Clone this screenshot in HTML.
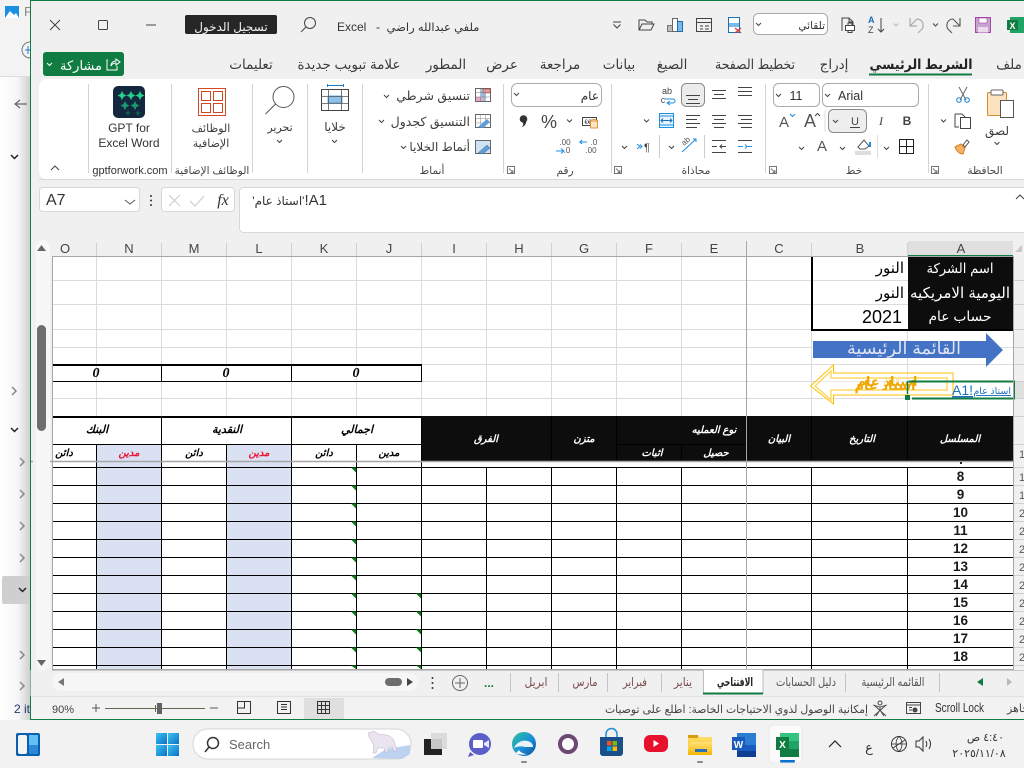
<!DOCTYPE html>
<html lang="ar"><head><meta charset="utf-8"><title>Excel</title>
<style>
html,body{margin:0;padding:0;background:#f2f2f2;width:1024px;height:768px;overflow:hidden}
svg{display:block;position:absolute;left:0;top:0}
text{font-family:"Liberation Sans","DejaVu Sans",sans-serif;fill:#333;font-size:12px}
.m{text-anchor:middle}
.r{direction:rtl}
.h{font-size:13.5px;fill:#3a3a3a}
.t{font-size:12px;fill:#3c3c3c}
.g{font-size:10.5px;fill:#444}
.c{font-size:14px;fill:#555}
.w{font-size:13.5px;fill:#fff;font-weight:normal}
.b{font-size:15px;fill:#000}
.th{font-size:10px;font-weight:bold;font-style:italic;fill:#fff}
.ts{font-size:10px;font-weight:bold;font-style:italic;fill:#000}
.tr{font-size:10px;font-weight:bold;font-style:italic;fill:#f01030}
.n{font-size:13.5px;font-weight:bold;fill:#1a1a1a}
.z{font-family:"Liberation Serif","DejaVu Serif",serif;font-size:14px;font-weight:bold;font-style:italic;fill:#000}
.tab{font-size:12px;fill:#555}
.ic{fill:none;stroke:#444;stroke-width:1}
.gr{fill:none;stroke:#777;stroke-width:1}
.ch{fill:none;stroke:#444;stroke-width:1}
</style></head>
<body>
<svg width="1024" height="768" viewBox="0 0 1024 768" xmlns="http://www.w3.org/2000/svg">
<defs>
<linearGradient id="sh" x1="0" x2="1" y1="0" y2="0"><stop offset="0" stop-color="#fff"/><stop offset=".6" stop-color="#f6f6f6"/><stop offset="1" stop-color="#cfcfcf"/></linearGradient>
<linearGradient id="ed" x1="0" x2="1" y1="0" y2="1"><stop offset="0" stop-color="#2fc5a0"/><stop offset=".55" stop-color="#1a8fd8"/><stop offset="1" stop-color="#0c4f9a"/></linearGradient>
<linearGradient id="fo" x1="0" x2="0" y1="0" y2="1"><stop offset="0" stop-color="#ffe27a"/><stop offset="1" stop-color="#f7b500"/></linearGradient>
<linearGradient id="st" x1="0" x2="1" y1="0" y2="1"><stop offset="0" stop-color="#3bc3f5"/><stop offset="1" stop-color="#0a72c4"/></linearGradient>
</defs>

<!-- background window at left -->
<rect x="0" y="0" width="30" height="720" fill="url(#sh)"/>
<rect x="0" y="0" width="30" height="76" fill="#f3f3f3"/>
<path d="M0 76.500H30" stroke="#ddd"/>
<path d="M5 6h14v12H5z" fill="#1b8fe0"/><path d="M5 18l5-7 4 4 2-2 3 5z" fill="#fff"/>
<text x="24" y="16" style="font-size:13px;fill:#888">P</text>
<circle cx="30" cy="50" r="8" fill="none" stroke="#777"/><path d="M25 50h5M28 46v8" stroke="#1b7fd0"/>
<path d="M27 104H16M20 100l-5 4 5 4" fill="none" stroke="#666" stroke-width="1.200"/>
<path d="M11 155l3.500 3.500 3.500-3.500" fill="none" stroke="#222" stroke-width="1.500"/>
<path d="M12 387l4 4-4 4" fill="none" stroke="#888" stroke-width="1.500"/>
<path d="M11 428l3.500 3.500 3.500-3.500" fill="none" stroke="#222" stroke-width="1.500"/>
<path d="M20 458l4 4-4 4M20 490l4 4-4 4M20 522l4 4-4 4M20 554l4 4-4 4M20 651l4 4-4 4M20 682l4 4-4 4" fill="none" stroke="#888" stroke-width="1.500"/>
<rect x="2" y="576" width="28" height="28" rx="2" fill="#cfcfcf"/>
<path d="M19 588l3.500 3.500 3.500-3.500" fill="none" stroke="#222" stroke-width="1.500"/>
<text x="14" y="713" style="font-size:12px;fill:#1f3a6e">2 it</text>

<!-- excel window -->
<rect x="30" y="0" width="994" height="720" fill="#f0f0f0"/>
<path d="M30.500 720V.5H1024" fill="none" stroke="#107c41"/>
<path d="M30 719.500H1024" stroke="#107c41" stroke-width="1"/>

<!-- title bar -->
<path d="M50 20l10 10M60 20l-10 10" class="ic"/>
<rect x="98.500" y="20.500" width="9" height="9" rx="1" class="ic"/>
<path d="M146 25h10" class="ic"/>
<rect x="185" y="15" width="92" height="19" rx="2" fill="#262626"/>
<text x="231" y="31" class="m r" style="font-size:12px;fill:#f2f2f2">تسجيل الدخول</text>
<circle cx="310" cy="23" r="5.500" class="ic"/><path d="M306 27l-5 5" class="ic"/>
<text x="337" y="31" style="font-size:12px;fill:#333">Excel</text>
<text x="378" y="31" class="m" style="font-size:12px">-</text>
<text x="433" y="31" class="m r" style="font-size:11.500px;fill:#333">ملفي عبدالله راضي</text>

<!-- QAT -->
<path d="M613 22h8M613.500 24.500l3.500 3.500 3.500-3.500" class="ic"/>
<path d="M639 30V20h6l2 2h5v2M639 30l3-6h12l-3 6z" class="ic"/>
<rect x="667.500" y="25.500" width="5" height="6" fill="#bbb" stroke="#777"/><rect x="672.500" y="18.500" width="5" height="13" fill="#fff" stroke="#666"/><rect x="677.500" y="21.500" width="5" height="10" fill="#79b8e8" stroke="#1b6fb5"/>
<rect x="696.500" y="18.500" width="15" height="13" class="ic"/><path d="M696.500 22.500h15M700 26h3M705 26h4M700 29h3M705 29h4" class="ic"/>
<rect x="728.500" y="17.500" width="11" height="15" fill="#fff" stroke="#1b6fb5"/><rect x="729" y="23" width="10" height="4" fill="#7db9e8"/><path d="M735 28l6 5M741 28l-6 5" stroke="#d83b3b" stroke-width="1.200" fill="none"/>
<rect x="753.500" y="13.500" width="74" height="21" rx="5" fill="#fff" stroke="#aaa"/>
<path d="M756 23l2.500 2.500 2.500-2.500" class="ch"/>
<text x="825" y="29" class="r" style="font-size:10.500px;fill:#333">تلقائي</text>
<path d="M842 31V18h7l4 4v4M849 18v4h4" class="ic"/><rect x="845.500" y="25.500" width="9" height="5" fill="#fff" stroke="#444"/><path d="M848 25v-2h4v2M848 30.500v2h4v-2" class="ic"/>
<text x="868" y="23" style="font-size:9px;fill:#1b6fb5;font-weight:bold">A</text><text x="868" y="33" style="font-size:9px;fill:#444">Z</text><path d="M881 18v14M878 29l3 3 3-3" class="ic"/>
<path d="M893.500 23.500l2.500 2.500 2.500-2.500" fill="none" stroke="#bbb"/>
<path d="M910 18v8h7M910 26l7-7h1a6.500 6.500 0 0 1 4 10l-4 4" fill="none" stroke="#aaa" stroke-width="1.200"/>
<path d="M933 23.500l2.500 2.500 2.500-2.500" class="ch"/>
<path d="M960 18v8h-7M960 26l-7-7h-1a6.500 6.500 0 0 0-4 10l4 4" fill="none" stroke="#555" stroke-width="1.100"/>
<rect x="975.500" y="17.500" width="15" height="15" fill="#c9a3cf" stroke="#a347a8"/><rect x="979" y="18" width="8" height="5" fill="#fff" stroke="#a347a8" stroke-width=".6"/><rect x="978" y="27" width="10" height="5.500" fill="#ebd9ee"/>
<rect x="1010" y="17" width="14" height="16" fill="#21a366"/><rect x="1007" y="20" width="11" height="10" fill="#107c41"/><text x="1012.500" y="29" class="m" style="font-size:9px;font-weight:bold;fill:#fff">X</text>

<!-- tabs -->
<text x="1009" y="69" class="m r h">ملف</text>
<text x="921" y="69" class="m r h" style="font-weight:bold;fill:#222" textLength="103" lengthAdjust="spacingAndGlyphs">الشريط الرئيسي</text>
<rect x="869" y="73.500" width="103" height="2" fill="#107c41"/>
<text x="834" y="69" class="m r h">إدراج</text>
<text x="755" y="69" class="m r h" textLength="80" lengthAdjust="spacingAndGlyphs">تخطيط الصفحة</text>
<text x="672" y="69" class="m r h">الصيغ</text>
<text x="619" y="69" class="m r h">بيانات</text>
<text x="560" y="69" class="m r h">مراجعة</text>
<text x="502" y="69" class="m r h">عرض</text>
<text x="446" y="69" class="m r h">المطور</text>
<text x="349" y="69" class="m r h" textLength="103" lengthAdjust="spacingAndGlyphs">علامة تبويب جديدة</text>
<text x="251" y="69" class="m r h">تعليمات</text>
<rect x="43" y="52" width="81" height="24" rx="3" fill="#107c41"/>
<text x="81" y="70" class="m r" style="font-size:13px;fill:#fff" textLength="42" lengthAdjust="spacingAndGlyphs">مشاركة</text>
<path d="M108 60h-1v10h10v-4M111 66c0-3 2-5 5-5v-2l4 3-4 3v-2c-2 0-4 1-5 3z" fill="none" stroke="#fff"/>
<path d="M47 63l2.500 2.500 2.500-2.500" fill="none" stroke="#fff"/>

<!-- ribbon -->
<path d="M1024 79H47a8 8 0 0 0-8 8v84a8 8 0 0 0 8 8h977z" fill="#fff"/>
<path d="M39 179.500H1024" stroke="#d8d8d8"/>
<path d="M88.500 84V173M171.500 84V173M252.500 84V173M307.500 84V173M362.500 84V173M503.500 84V173M611.500 84V173M765.500 84V173M928.500 84V173" stroke="#d4d4d4"/>
<path d="M51 170l4-4 4 4" class="ic"/>

<!-- GPT -->
<rect x="113" y="86" width="32" height="32" rx="5" fill="#13283f"/>
<g fill="#28d18a"><path d="M122 91l1.500 3 3 1.500-3 1.500-1.500 3-1.500-3-3-1.500 3-1.500z"/><path d="M131 91l1.500 3 3 1.500-3 1.500-1.500 3-1.500-3-3-1.500 3-1.500z"/><path d="M140 91l1.500 3 3 1.500-3 1.500-1.500 3-1.500-3-3-1.500 3-1.500z"/></g>
<g fill="#1a9a6c"><path d="M125 101l1.500 3 3 1.500-3 1.500-1.500 3-1.500-3-3-1.500 3-1.500z"/><path d="M135 101l1.500 3 3 1.500-3 1.500-1.500 3-1.500-3-3-1.500 3-1.500z"/></g>
<g fill="#115f4d"><path d="M128 110l1 2 2 1-2 1-1 2-1-2-2-1 2-1z"/><path d="M138 110l1 2 2 1-2 1-1 2-1-2-2-1 2-1z"/></g>
<text x="129" y="132" class="m" style="font-size:12px;fill:#333">GPT for</text>
<text x="129" y="147" class="m" style="font-size:12px;fill:#333">Excel Word</text>
<text x="130" y="174" class="m" style="font-size:11px;fill:#333">gptforwork.com</text>

<!-- add-ins -->
<rect x="198.500" y="88.500" width="27" height="27" fill="none" stroke="#d24726"/>
<rect x="201.500" y="91.500" width="9" height="9" fill="none" stroke="#d24726"/><rect x="213.500" y="91.500" width="9" height="9" fill="none" stroke="#d24726"/>
<rect x="201.500" y="103.500" width="9" height="9" fill="none" stroke="#d24726"/><rect x="213.500" y="103.500" width="9" height="9" fill="none" stroke="#d24726"/>
<text x="211" y="132" class="m r t" style="font-size:11px">الوظائف</text>
<text x="211" y="147" class="m r t" style="font-size:11px">الإضافية</text>
<text x="212" y="174" class="m r g">الوظائف الإضافية</text>

<!-- edit -->
<circle cx="283.500" cy="97" r="10.500" fill="none" stroke="#555"/><path d="M275.500 104l-10 10" stroke="#555" fill="none"/>
<text x="280" y="131" class="m r t" style="font-size:11px">تحرير</text>
<path d="M277 140l2.500 2.500 2.500-2.500" class="ch"/>
<!-- cells -->
<rect x="321.500" y="89.500" width="27" height="21" fill="#fff" stroke="#444"/>
<rect x="328" y="96" width="14" height="7" fill="#8fc1ea" stroke="#1b7fd0" stroke-width=".6"/>
<path d="M321.500 96.500h27M321.500 103.500h27M328.500 89.500v21M341.500 89.500v21" stroke="#555" fill="none" stroke-width=".8"/>
<path d="M327.500 85.500h16M327.500 84v3M343.500 84v3" stroke="#1b7fd0" fill="none"/>
<text x="335" y="131" class="m r t">خلايا</text>
<path d="M332 140l2.500 2.500 2.500-2.500" class="ch"/>

<!-- styles -->
<text x="470" y="100" class="r t" style="font-size:12.500px">تنسيق شرطي</text>
<path d="M384 95l2.500 2.500 2.500-2.500" class="ch"/>
<rect x="475.500" y="88.500" width="15" height="13" fill="#fff" stroke="#666"/><rect x="481" y="89" width="4" height="12" fill="#8fc1ea"/><rect x="483" y="89" width="7" height="4" fill="#e8a0a0" stroke="#c33" stroke-width=".5"/><rect x="476" y="97" width="7" height="4" fill="#eaa8c8"/><path d="M475.500 92.500h15M480.500 88.500v13M485.500 88.500v13M475.500 97h15" stroke="#777" stroke-width=".5" fill="none"/>
<text x="470" y="126" class="r t" style="font-size:12.500px">التنسيق كجدول</text>
<path d="M379 120l2.500 2.500 2.500-2.500" class="ch"/>
<rect x="475.500" y="114.500" width="15" height="13" fill="#fff" stroke="#666"/><path d="M475.500 118.500h15M480.500 114.500v13M485.500 114.500v13M475.500 123h15" stroke="#888" stroke-width=".5" fill="none"/><path d="M478 127l9-8 3 3-7 6z" fill="#5a9fdb"/>
<text x="470" y="151" class="r t">أنماط الخلايا</text>
<path d="M401 146l2.500 2.500 2.500-2.500" class="ch"/>
<rect x="475.500" y="140.500" width="15" height="13" fill="#cfe3f5" stroke="#666"/><path d="M478 153l9-8 3 3-7 6z" fill="#5a9fdb" stroke="#555" stroke-width=".4"/>
<text x="432" y="174" class="m r g">أنماط</text>
<path d="M507.500 166.500h7v7h-7zM509 168.500l4 4M513 170v2.500h-2.500" class="gr"/>

<!-- number -->
<rect x="511.500" y="83.500" width="90" height="23" rx="6" fill="#fff" stroke="#aaa"/>
<path d="M514 93l2.500 2.500 2.500-2.500" class="ch"/>
<text x="599" y="100" class="r" style="font-size:12px;fill:#333">عام</text>
<circle cx="523.500" cy="119" r="3.800" fill="#333"/><path d="M526 120c1 3-1 6-4.500 7.500 1.500-1.500 2-3 1.500-5z" fill="#333"/>
<text x="549" y="128" class="m" style="font-size:18px;fill:#444">%</text>
<path d="M567 119.500l2.500 2.500 2.500-2.500" class="ch"/>
<rect x="582.500" y="117.500" width="14" height="8" fill="#fff" stroke="#444"/><text x="589.500" y="124" class="m" style="font-size:6px">€€€</text>
<ellipse cx="594" cy="121" rx="3.500" ry="1.500" fill="#fde6c8" stroke="#d97f17" stroke-width=".8"/><rect x="590.500" y="121" width="7" height="7" fill="#fde6c8" stroke="#d97f17" stroke-width=".8"/>
<text x="594" y="145" style="font-size:8px;fill:#555" class="m">.0</text><text x="591" y="153" style="font-size:8px;fill:#555" class="m">.00</text>
<path d="M583 142h-3l2-2M580 142l2 2M580 142h7" stroke="#1b8fe0" fill="none"/>
<text x="565" y="145" style="font-size:8px;fill:#555" class="m">.00</text><text x="567" y="153" style="font-size:8px;fill:#555" class="m">.0</text>
<path d="M556 151h8M561 148.500l3 2.500-3 2.500" stroke="#1b8fe0" fill="none"/>
<text x="565" y="174" class="m r g">رقم</text>
<path d="M614.500 166.500h7v7h-7zM616 168.500l4 4M620 170v2.500h-2.500" class="gr"/>

<!-- alignment -->
<path d="M738 87.500h14M738 91.500h14M738 95.500h14" class="ic"/>
<path d="M712 90.500h14M714 94.500h10M712 98.500h14" class="ic"/>
<rect x="681.500" y="83.500" width="23" height="23" rx="5" fill="#ececec" stroke="#8a8a8a"/>
<path d="M686 95.500h14M688 99.500h10M686 103.500h14" class="ic"/>
<text x="667" y="94" class="m" style="font-size:9px;fill:#444">ab</text><text x="663" y="103" class="m" style="font-size:9px;fill:#444">c</text><path d="M665 99h8a2 2 0 0 1 0 4h-5M670 101l-3 2 3 2" stroke="#1b8fe0" fill="none"/>
<path d="M738 115.500h14M741 119.500h11M738 123.500h14M741 127.500h11" class="ic"/>
<path d="M712 115.500h14M714 119.500h10M712 123.500h14M714 127.500h10" class="ic"/>
<path d="M686 115.500h14M686 119.500h11M686 123.500h14M686 127.500h11" class="ic"/>
<rect x="659.500" y="113.500" width="14" height="14" fill="#eaf4fc" stroke="#1b8fe0"/><path d="M659.500 116h14M659.500 125h14" stroke="#1b8fe0" fill="none"/><path d="M661 120.500h11M663 118.500l-2 2 2 2M670 118.500l2 2-2 2" stroke="#1b6fb5" fill="none"/>
<path d="M644 119.500l2.500 2.500 2.500-2.500" class="ch"/>
<path d="M738 146.500h5M747 146.500h5M745 144.500l2 2-2 2" class="ic" style="stroke:#1b8fe0"/><path d="M738 140.500h14M738 152.500h14" class="ic"/>
<path d="M712 140.500h14M712 152.500h14M712 146.500h5M720 146.500h6M722 144.500l-2 2 2 2" class="ic"/>
<path d="M682 152l14-13M693 139h3v3" stroke="#1b8fe0" fill="none"/><text x="684" y="146" style="font-size:8px;fill:#555" transform="rotate(-40 684 146)">ab</text>
<path d="M669 146l2.500 2.500 2.500-2.500" class="ch"/>
<text x="647" y="151" style="font-size:11px;fill:#444" class="m">¶</text><path d="M640 144.500l2 2-2 2M637 144l3 2.500-3 2.500" stroke="#1b8fe0" fill="none"/>
<path d="M622 146l2.500 2.500 2.500-2.500" class="ch"/>
<path d="M704.500 135V158M659.500 135V158" stroke="#ccc"/>
<text x="696" y="174" class="m r g">محاذاة</text>
<path d="M769.500 166.500h7v7h-7zM771 168.500l4 4M775 170v2.500h-2.500" class="gr"/>

<!-- font -->
<rect x="773.500" y="83.500" width="46" height="23" rx="5" fill="#fff" stroke="#aaa"/>
<path d="M776 94l2.500 2.500 2.500-2.500" class="ch"/>
<text x="796" y="100" class="m" style="font-size:12.500px;fill:#333">11</text>
<rect x="822.500" y="83.500" width="96" height="23" rx="5" fill="#fff" stroke="#aaa"/>
<path d="M825 94l2.500 2.500 2.500-2.500" class="ch"/>
<text x="838" y="100" style="font-size:12.500px;fill:#333">Arial</text>
<text x="907" y="125" class="m" style="font-size:12px;font-weight:bold;fill:#444">B</text>
<text x="881" y="125" class="m" style="font-size:12px;font-style:italic;fill:#444;font-family:'Liberation Serif',serif">I</text>
<rect x="828.500" y="109.500" width="38" height="23" rx="5" fill="#eeeeee" stroke="#8a8a8a"/>
<text x="855" y="125" class="m" style="font-size:11px;fill:#444">U</text><path d="M850 127.500h10" stroke="#444"/>
<path d="M833 120l2.500 2.500 2.500-2.500" class="ch"/>
<path d="M825 110V132" stroke="#ddd"/>
<text x="810" y="127" class="m" style="font-size:18px;fill:#555">A</text><path d="M815 116l2.500-2.500 2.500 2.500" class="ch"/>
<text x="784" y="127" class="m" style="font-size:15px;fill:#555">A</text><path d="M790 114l2.500 2.500 2.500-2.500" stroke="#1b8fe0" fill="none"/>
<rect x="899.500" y="139.500" width="14" height="14" fill="none" stroke="#222"/><path d="M906.500 139.500v14M899.500 146.500h14" stroke="#222"/>
<path d="M884 147l2.500 2.500 2.500-2.500" class="ch"/>
<path d="M877.500 135V158" stroke="#ddd"/>
<path d="M858 147l6-7 5 6-4 3h-5z" fill="#fff" stroke="#555"/><path d="M870 142v5" stroke="#1b8fe0" stroke-width="2"/><rect x="855" y="151" width="16" height="4" fill="#ddd"/>
<path d="M840 147l2.500 2.500 2.500-2.500" class="ch"/>
<text x="822" y="151" class="m" style="font-size:15px;fill:#555">A</text>
<path d="M799 147l2.500 2.500 2.500-2.500" class="ch"/>
<text x="854" y="174" class="m r g">خط</text>
<path d="M931.500 166.500h7v7h-7zM933 168.500l4 4M937 170v2.500h-2.500" class="gr"/>

<!-- clipboard -->
<rect x="987.500" y="92.500" width="19" height="23" rx="1" fill="#fbe3c0" stroke="#d98a2b"/>
<rect x="991" y="90" width="12" height="5" rx="1" fill="#fff" stroke="#666"/>
<rect x="1000.500" y="100.500" width="13" height="17" fill="#fff" stroke="#555"/>
<text x="997" y="135" class="m r t">لصق</text>
<path d="M994.500 142l2.500 2.500 2.500-2.500" class="ch"/>
<path d="M959 87l7 13M967 87l-7 13" stroke="#666" fill="none"/><circle cx="959" cy="100" r="2.300" fill="none" stroke="#1b7fd0"/><circle cx="967" cy="100" r="2.300" fill="none" stroke="#1b7fd0"/>
<path d="M955 114h7l3 3M955 114v13h4" class="ic"/><rect x="960.500" y="117.500" width="10" height="11" fill="#fff" stroke="#444"/>
<path d="M941 119.500l2.500 2.500 2.500-2.500" class="ch"/>
<path d="M955 147l6-3 4 4-2 6c-3 0-6-2-8-7z" fill="#f5b06a" stroke="#d97f17"/><path d="M963 145l4-5 2 2-4 5z" fill="#fff" stroke="#555"/>
<text x="985" y="174" class="m r g">الحافظة</text>

<!-- formula bar -->
<rect x="39.500" y="187.500" width="100" height="24" rx="3" fill="#fff" stroke="#d8d8d8"/>
<text x="46" y="205" style="font-size:16px;fill:#333">A7</text>
<path d="M125 200l5 4 5-4" fill="none" stroke="#555"/>
<circle cx="151" cy="196" r="1" fill="#333"/><circle cx="151" cy="200.500" r="1" fill="#333"/><circle cx="151" cy="205" r="1" fill="#333"/>
<rect x="161.500" y="187.500" width="73" height="24" rx="3" fill="#fff" stroke="#d8d8d8"/>
<path d="M169 195l11 11M180 195l-11 11" stroke="#c8c8c8" fill="none"/>
<path d="M190 201l5 5 9-10" stroke="#c8c8c8" fill="none"/>
<text x="223" y="205" class="m" style="font-size:16px;font-style:italic;font-family:'Liberation Serif',serif;fill:#333">fx</text>
<rect x="239.500" y="187.500" width="790" height="45" rx="4" fill="#fff" stroke="#d8d8d8"/>
<text x="327" y="205" class="r" style="font-size:12px;fill:#333"><tspan style="font-size:15px">A1!</tspan>'استاذ عام'</text>
<path d="M1016 199l4-4 4 4" class="ic"/>

<!-- vertical scrollbar -->
<rect x="36" y="240" width="14" height="430" rx="7" fill="#f7f7f7"/>
<path d="M37 251l4.500-6 4.500 6z" fill="#666"/>
<rect x="37" y="325" width="9" height="106" rx="4.500" fill="#6e6e6e"/>
<path d="M37 660l4.500 6 4.500-6z" fill="#666"/>

<!-- column headers -->
<rect x="53" y="241" width="961" height="16" fill="#f0f0f0"/>
<rect x="908" y="241" width="105" height="14" fill="#dfdfdf"/>
<rect x="908" y="255" width="105" height="2" fill="#107c41"/>
<path d="M96.500 243V256M161.500 243V256M226.500 243V256M291.500 243V256M356.500 243V256M421.500 243V256M486.500 243V256M551.500 243V256M616.500 243V256M681.500 243V256M811.500 243V256M907.500 243V256" stroke="#d0d0d0"/>
<path d="M1015 252l7-7v7z" fill="#c8c8c8"/>
<g>
<text x="65" y="253" class="m" style="font-size:13px;fill:#444">O</text>
<text x="129" y="253" class="m" style="font-size:13px;fill:#444">N</text>
<text x="194" y="253" class="m" style="font-size:13px;fill:#444">M</text>
<text x="259" y="253" class="m" style="font-size:13px;fill:#444">L</text>
<text x="324" y="253" class="m" style="font-size:13px;fill:#444">K</text>
<text x="389" y="253" class="m" style="font-size:13px;fill:#444">J</text>
<text x="454" y="253" class="m" style="font-size:13px;fill:#444">I</text>
<text x="519" y="253" class="m" style="font-size:13px;fill:#444">H</text>
<text x="584" y="253" class="m" style="font-size:13px;fill:#444">G</text>
<text x="649" y="253" class="m" style="font-size:13px;fill:#444">F</text>
<text x="714" y="253" class="m" style="font-size:13px;fill:#444">E</text>
<text x="779" y="253" class="m" style="font-size:13px;fill:#444">C</text>
<text x="860" y="253" class="m" style="font-size:13px;fill:#444">B</text>
<text x="961" y="253" class="m" style="font-size:13px;fill:#444">A</text>
</g>

<!-- sheet -->
<rect x="53" y="257" width="961" height="412" fill="#fff"/>
<rect x="1014" y="257" width="10" height="412" fill="#f0f0f0"/>
<rect x="1014" y="381" width="10" height="18" fill="#dfdfdf"/>
<path d="M1014 280.500H1024M1014 304.500H1024M1014 329.500H1024M1014 347.500H1024M1014 364.500H1024M1014 381.500H1024M1014 398.500H1024M1014 416.500H1024M1014 444.500H1024M1014 467.500H1024M1014 485.500H1024M1014 503.500H1024M1014 521.500H1024M1014 539.500H1024M1014 557.500H1024M1014 575.500H1024M1014 593.500H1024M1014 611.500H1024M1014 629.500H1024M1014 647.500H1024M1014 665.500H1024" stroke="#d0d0d0"/>
<path d="M53 280.500H1013M53 304.500H1013M53 329.500H1013M53 347.500H1013M53 364.500H1013M53 381.500H1013M53 398.500H1013" stroke="#dcdcdc"/>
<path d="M96.500 257V416M161.500 257V416M226.500 257V416M291.500 257V416M356.500 257V416M421.500 257V416M486.500 257V416M551.500 257V416M616.500 257V416M681.500 257V416M811.500 257V416M907.500 329V416M1013.500 329V416" stroke="#dcdcdc"/>

<!-- A1:B3 -->
<rect x="908" y="257" width="106" height="72" fill="#0d0d0d"/>
<path d="M812 257V330H1013" fill="none" stroke="#000" stroke-width="2"/>
<text x="960" y="273" class="m r w" textLength="67" lengthAdjust="spacingAndGlyphs">اسم الشركة</text>
<text x="960" y="298" class="m r w" style="font-size:15px" textLength="100" lengthAdjust="spacingAndGlyphs">اليومية الامريكيه</text>
<text x="960" y="321" class="m r w" textLength="63" lengthAdjust="spacingAndGlyphs">حساب عام</text>
<text x="904" y="273" class="r b">النور</text>
<text x="904" y="298" class="r b">النور</text>
<text x="902" y="323" style="font-size:18px;text-anchor:end;fill:#000">2021</text>

<!-- blue arrow -->
<path d="M813 341H986V333L1003 350 986 367V358H813z" fill="#4472c4"/>
<text x="904" y="354" class="m r" style="font-size:17px;fill:#dfe6f5" textLength="114" lengthAdjust="spacingAndGlyphs">القائمة الرئيسية</text>

<!-- 0 row -->
<path d="M53 365H422" stroke="#000" stroke-width="2"/>
<path d="M53 381.500H422M161.500 365V381M291.500 365V381M421.500 365V381" stroke="#000"/>
<text x="96" y="377" class="m z">0</text><text x="226" y="377" class="m z">0</text><text x="356" y="377" class="m z">0</text>

<!-- yellow arrow -->
<path d="M810.500 386L833.500 365V373H953V395H833.500V404z" fill="#fff" fill-opacity=".4" stroke="#ffc000"/>
<path d="M815 386L831 371V378H947V390H831V400z" fill="none" stroke="#ffd966" stroke-width="1.500"/>
<text x="885" y="390" class="m r" style="font-size:13px;font-weight:bold;fill:#f0a800">استاذ عام</text>
<text x="887" y="386" class="m r" style="font-size:13px;font-weight:bold;fill:#f0a800">استاذ عام</text>

<!-- A7 selected -->
<path d="M908.500 381.500H1014V398.500H912" fill="none" stroke="#107c41" stroke-width="2"/>
<path d="M907.500 381V394" stroke="#107c41" stroke-width="1.500"/>
<rect x="905" y="395" width="5" height="5" fill="#107c41"/>
<text x="952" y="395" dir="ltr" style="font-size:14px;fill:#1f6fc0;text-decoration:underline;direction:ltr">A1!</text>
<text x="1011" y="394" class="r" style="font-size:9.500px;fill:#1f6fc0;text-decoration:underline">استاذ عام</text>

<!-- header table -->
<rect x="422" y="416" width="591" height="45" fill="#0d0d0d"/>
<rect x="97" y="444" width="65" height="225" fill="#d9e1f2"/>
<rect x="227" y="444" width="65" height="225" fill="#d9e1f2"/>
<path d="M53 417H422" stroke="#000" stroke-width="2"/>
<path d="M53 444.500H422M161.500 417V669M291.500 417V669M421.500 417V669M96.500 444V669M226.500 444V669M356.500 444V669M486.500 467V669M551.500 467V669M616.500 467V669M681.500 467V669M811.500 467V669M907.500 467V669" stroke="#000"/>
<path d="M551.500 416V461M616.500 416V461M681.500 444V461M811.500 416V461M907.500 416V461M617 444.500H747" stroke="#000"/>
<path d="M53 467.500H1013M53 485.500H1013M53 503.500H1013M53 521.500H1013M53 539.500H1013M53 557.500H1013M53 575.500H1013M53 593.500H1013M53 611.500H1013M53 629.500H1013M53 647.500H1013M53 665.500H1013" stroke="#000"/>

<text x="97" y="433" class="m r ts" style="font-size:11px">البنك</text>
<text x="227" y="433" class="m r ts" style="font-size:11px">النقدية</text>
<text x="357" y="433" class="m r ts" style="font-size:11px">اجمالي</text>
<text x="64" y="456" class="m r ts">دائن</text>
<text x="129" y="456" class="m r tr">مدين</text>
<text x="194" y="456" class="m r ts">دائن</text>
<text x="259" y="456" class="m r tr">مدين</text>
<text x="324" y="456" class="m r ts">دائن</text>
<text x="389" y="456" class="m r ts">مدين</text>
<text x="486" y="442" class="m r th">الفرق</text>
<text x="584" y="442" class="m r th">متزن</text>
<text x="714" y="433" class="m r th">نوع العمليه</text>
<text x="716" y="456" class="m r th">حصيل</text>
<text x="652" y="456" class="m r th">اثبات</text>
<text x="779" y="442" class="m r th">البيان</text>
<text x="862" y="442" class="m r th">التاريخ</text>
<text x="960" y="442" class="m r th">المسلسل</text>

<!-- freeze panes / border -->
<path d="M52.500 257V669.500H1014M52 256.500H1014" fill="none" stroke="#a6a6a6"/>
<path d="M1013.500 257V669" stroke="#a6a6a6"/>
<path d="M50 461.500H1014M31 461.500H33" stroke="#a6a6a6" stroke-width="1.500"/>
<path d="M746.500 241V669" stroke="#a6a6a6"/>

<!-- green triangles -->
<path d="M351 467.500h5v5zM351 485.500h5v5zM351 503.500h5v5zM351 521.500h5v5zM351 539.500h5v5zM351 557.500h5v5zM351 575.500h5v5zM351 593.500h5v5zM351 611.500h5v5zM351 629.500h5v5zM351 647.500h5v5zM351 665.500h5v3.500zM416 593.500h5v5zM416 611.500h5v5zM416 629.500h5v5zM416 647.500h5v5zM416 665.500h5v3.500z" fill="#0a7a16"/>

<!-- numbers -->
<text x="960.500" y="481" class="m n">8</text>
<text x="960.500" y="499" class="m n">9</text>
<text x="960.500" y="517" class="m n">10</text>
<text x="960.500" y="535" class="m n">11</text>
<text x="960.500" y="553" class="m n">12</text>
<text x="960.500" y="571" class="m n">13</text>
<text x="960.500" y="589" class="m n">14</text>
<text x="960.500" y="607" class="m n">15</text>
<text x="960.500" y="625" class="m n">16</text>
<text x="960.500" y="643" class="m n">17</text>
<text x="960.500" y="661" class="m n">18</text>
<path d="M961 462v2" stroke="#222" stroke-width="2"/>
<g>
<text x="1019" y="458" style="font-size:11px;fill:#555">1</text><text x="1019" y="481" style="font-size:11px;fill:#555">1</text><text x="1019" y="499" style="font-size:11px;fill:#555">1</text>
<text x="1019" y="517" style="font-size:11px;fill:#555">2</text><text x="1019" y="535" style="font-size:11px;fill:#555">2</text><text x="1019" y="553" style="font-size:11px;fill:#555">2</text><text x="1019" y="571" style="font-size:11px;fill:#555">2</text><text x="1019" y="589" style="font-size:11px;fill:#555">2</text><text x="1019" y="607" style="font-size:11px;fill:#555">2</text><text x="1019" y="625" style="font-size:11px;fill:#555">2</text><text x="1019" y="643" style="font-size:11px;fill:#555">2</text><text x="1019" y="661" style="font-size:11px;fill:#555">2</text>
</g>

<!-- sheet tab bar -->
<rect x="30.500" y="670" width="993" height="26" fill="#f0f0f0"/>
<path d="M52 670.500H1024" stroke="#c8c8c8"/>
<rect x="52" y="673" width="366" height="18" rx="9" fill="#f6f6f6"/>
<path d="M64 678l-6 4 6 4z" fill="#777"/>
<rect x="385" y="678" width="17" height="8" rx="4" fill="#6e6e6e"/>
<path d="M407 678l6 4-6 4z" fill="#444"/>
<circle cx="432.500" cy="678" r="1" fill="#333"/><circle cx="432.500" cy="683" r="1" fill="#333"/><circle cx="432.500" cy="688" r="1" fill="#333"/>
<circle cx="460" cy="683" r="7.500" fill="none" stroke="#666"/><path d="M455 683h10M460 678v10" stroke="#666"/>
<text x="489" y="687" class="m" style="font-size:12px;fill:#107c41;font-weight:bold">...</text>
<path d="M510.500 673V692M558.500 673V692M607.500 673V692M661.500 673V692M845.500 673V692M939.500 673V692" stroke="#c4c4c4"/>
<path d="M703.500 694V669.500H763V694" fill="#fff" stroke="#bdbdbd"/>
<rect x="703" y="692.500" width="60" height="2" fill="#107c41"/>
<text x="536" y="686" class="m r tab" style="fill:#7a4a4a" textLength="23" lengthAdjust="spacingAndGlyphs">ابريل</text>
<text x="585" y="686" class="m r tab" style="fill:#7a4a4a" textLength="25" lengthAdjust="spacingAndGlyphs">مارس</text>
<text x="635" y="686" class="m r tab" style="fill:#7a4a4a" textLength="24" lengthAdjust="spacingAndGlyphs">فبراير</text>
<text x="683" y="686" class="m r tab" style="fill:#7a4a4a" textLength="18" lengthAdjust="spacingAndGlyphs">يناير</text>
<text x="735" y="686" class="m r tab" style="font-weight:bold;fill:#222" textLength="36" lengthAdjust="spacingAndGlyphs">الافتتاحي</text>
<text x="806" y="686" class="m r tab" textLength="60" lengthAdjust="spacingAndGlyphs">دليل الحسابات</text>
<text x="893" y="686" class="m r tab" textLength="63" lengthAdjust="spacingAndGlyphs">القائمه الرئيسية</text>
<path d="M983 678v8l-6-4z" fill="#107c41"/>
<path d="M1007 678v8l5-4z" fill="#b8b8b8"/>

<!-- status bar -->
<rect x="31" y="697" width="993" height="22" fill="#f2f2f2"/>
<path d="M31 696.500H1024" stroke="#e2e2e2"/>
<text x="63" y="713" class="m" style="font-size:11px;fill:#444">90%</text>
<path d="M92 708h8M96 704v8" stroke="#555"/>
<path d="M105 708.500H205" stroke="#665"/>
<rect x="157" y="703" width="5" height="11" fill="#665f68"/>
<path d="M155.500 705v7" stroke="#665"/>
<path d="M210 708h8" stroke="#555"/>
<rect x="237.500" y="701.500" width="13" height="12" fill="none" stroke="#333"/><path d="M237.500 708h7v-6.500" fill="none" stroke="#333"/>
<rect x="277.500" y="701.500" width="13" height="12" fill="none" stroke="#333"/><path d="M281 704.500h6M281 707h6M281 709.500h6" stroke="#333"/>
<rect x="304" y="698" width="40" height="21" fill="#dfdfdf"/>
<rect x="317.500" y="701.500" width="12" height="12" fill="none" stroke="#333"/><path d="M321.500 701.500v12M325.500 701.500v12M317.500 705.500h12M317.500 709.500h12" stroke="#333" fill="none"/>
<text x="868" y="713" class="r" style="font-size:11px;fill:#444" textLength="263" lengthAdjust="spacingAndGlyphs">إمكانية الوصول لذوي الاحتياجات الخاصة: اطلع على توصيات</text>
<circle cx="880" cy="703" r="2" fill="none" stroke="#444"/><path d="M873 705l7 2 7-2M880 707v3l-4 6M880 710l4 6M874 705l12 11M886 705l-12 11" fill="none" stroke="#444" stroke-width=".9"/>
<rect x="906.500" y="702.500" width="14" height="11" fill="none" stroke="#444"/><path d="M906.500 705h14M909 707.500h3M909 710h3" stroke="#444"/><circle cx="915" cy="710" r="2.500" fill="#444"/>
<text x="935" y="712" style="font-size:12.500px;fill:#333" textLength="49" lengthAdjust="spacingAndGlyphs">Scroll Lock</text>
<text x="1029" y="712" class="r" style="font-size:11px;fill:#444">جاهز</text>

<!-- taskbar -->
<rect x="0" y="720" width="1024" height="48" fill="#f2f2f2"/>
<rect x="16" y="733" width="24" height="23" rx="2" fill="#0a5fb0"/>
<rect x="18" y="735" width="9" height="19" rx="2" fill="#f4f4f4"/>
<rect x="29" y="735" width="9" height="10" fill="#62c0f5"/><rect x="29" y="745" width="9" height="9" fill="#2a8ad8"/>

<rect x="156" y="733" width="11" height="11" fill="url(#st)"/><rect x="168" y="733" width="11" height="11" fill="url(#st)"/><rect x="156" y="745" width="11" height="11" fill="url(#st)"/><rect x="168" y="745" width="11" height="11" fill="url(#st)"/>

<rect x="193" y="729" width="218" height="30" rx="15" fill="#fff" stroke="#d6d6d6"/>
<circle cx="213" cy="743" r="5.500" fill="none" stroke="#333" stroke-width="1.500"/><path d="M209 747l-4 5" stroke="#333" stroke-width="1.500"/>
<text x="229" y="749" style="font-size:13px;fill:#666">Search</text>
<path d="M372 758l14-9 24-4v9l-8 5z" fill="#bcd2ee"/>
<path d="M368 733l6-2 4 3 8 1c5 1 8 4 9 9l2 7h-3l-2-4-4 1 0 4h-3l-1-4-6 0-2 5h-3l1-7-3-6-2-3z" fill="#e9e4ef" stroke="#b9b0c8" stroke-width=".5"/>

<rect x="424" y="739" width="18" height="16" fill="#222"/>
<rect x="431" y="733" width="16" height="16" fill="#d8d8d8" opacity=".9"/>

<circle cx="480" cy="744" r="11" fill="#5b5fc7"/><path d="M470 752l-2 5 6-2z" fill="#5b5fc7"/>
<rect x="473" y="740" width="10" height="8" rx="1" fill="#fff"/><path d="M484 743l5-3v8l-5-3z" fill="#e9e4ff"/>

<circle cx="524" cy="744" r="12" fill="url(#ed)"/><path d="M514 748c3-7 11-9 16-6 2 1 3 3 3 5h-8c-3-1-7-1-11 1z" fill="#e6f3fb"/><path d="M516 753c3 2 8 2 11 1-4 0-7-2-8-4z" fill="#fff"/>
<circle cx="568" cy="744" r="8" fill="#fff" stroke="#6b4a72" stroke-width="4"/>
<path d="M600 737h23v16a3 3 0 0 1-3 3h-17a3 3 0 0 1-3-3z" fill="#1a4f8a"/><path d="M606 737v-3a5 5 0 0 1 11 0v3" fill="none" stroke="#1d8fd8" stroke-width="1.500"/>
<rect x="607" y="741" width="4.500" height="4.500" fill="#f25022"/><rect x="612.500" y="741" width="4.500" height="4.500" fill="#7fba00"/><rect x="607" y="746.500" width="4.500" height="4.500" fill="#00a4ef"/><rect x="612.500" y="746.500" width="4.500" height="4.500" fill="#ffb900"/>
<rect x="644" y="735" width="24" height="17" rx="6" fill="#e8112d"/><path d="M653.500 740v7l5.500-3.500z" fill="#fff"/>
<path d="M688 735h10l2 2h12v18h-24z" fill="url(#fo)"/><rect x="688" y="735" width="10" height="3" fill="#d69d12"/><path d="M688 745l4-3h20v13h-24z" fill="url(#fo)"/><rect x="695" y="749" width="12" height="3" fill="#2a6fb8"/>
<rect x="737" y="733" width="19" height="24" fill="#2b7cd3"/><rect x="737" y="745" width="19" height="6" fill="#185abd"/><rect x="737" y="751" width="19" height="6" fill="#103f91"/>
<rect x="732" y="737" width="13" height="13" fill="#185abd"/><text x="738.500" y="748" class="m" style="font-size:10px;font-weight:bold;fill:#fff">W</text>
<rect x="769" y="725" width="33" height="38" rx="4" fill="#fbfbfb" stroke="#e8e8e8"/>
<rect x="780" y="733" width="19" height="24" fill="#21a366"/><rect x="780" y="733" width="19" height="8" fill="#33c481"/><rect x="780" y="749" width="19" height="8" fill="#107c41"/>
<rect x="776" y="737" width="13" height="13" fill="#107c41"/><text x="782.500" y="748" class="m" style="font-size:10px;font-weight:bold;fill:#fff">X</text>
<rect x="780" y="760" width="15" height="2.500" rx="1" fill="#0a6fd0"/>
<rect x="521" y="761" width="6" height="2" rx="1" fill="#888"/><rect x="697" y="761" width="6" height="2" rx="1" fill="#888"/>
<path d="M829 747l6-6 6 6" fill="none" stroke="#222" stroke-width="1.200"/>
<text x="869" y="752" class="m r" style="font-size:13px;fill:#333">ع</text>
<circle cx="899" cy="744" r="7.500" fill="none" stroke="#333"/><path d="M891.500 744h15M899 736.500c-4 4-4 11 0 15M899 736.500c4 4 4 11 0 15M893 748l12-8" fill="none" stroke="#333" stroke-width=".8"/>
<path d="M916 741v6h3l4 4v-14l-4 4zM926 741c1 2 1 4 0 6M929 739c2 3 2 7 0 10" fill="none" stroke="#333"/>
<text x="1004" y="741" class="r" style="font-size:11px;fill:#333">٤:٤٠ ص</text>
<text x="979" y="757" class="m" style="font-size:11px;fill:#333">٢٠٢٥/١١/٠٨</text>
</svg>
</body></html>
